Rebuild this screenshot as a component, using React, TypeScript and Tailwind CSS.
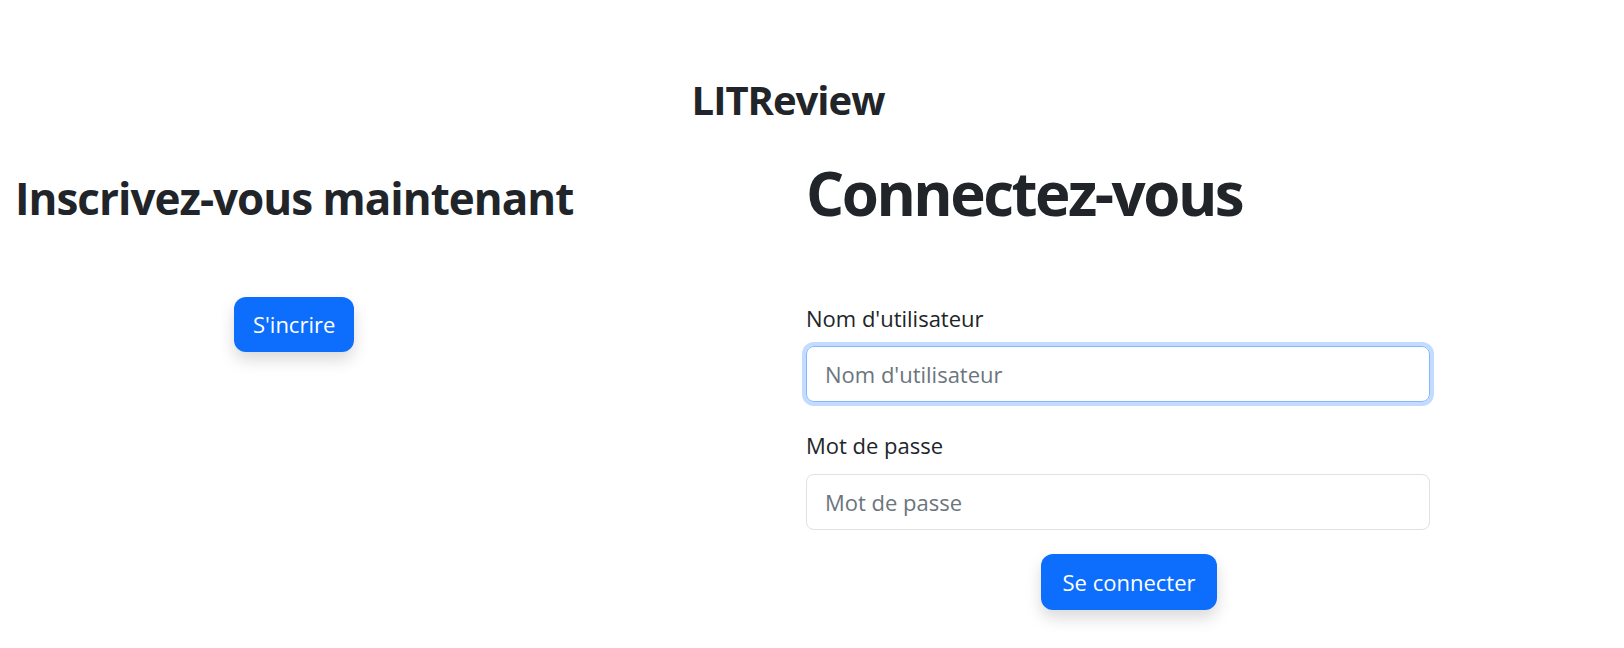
import React from "react";

export default function App() {
  return (
    <div
      className="h-[648px] w-full bg-white text-[#212529] overflow-hidden"
      style={{ fontFamily: '"Open Sans", "Noto Sans", sans-serif' }}
    >
      <header className="pt-[76px] pr-[48px] text-center">
        <h1 className="text-[40px] font-bold leading-[1.2] tracking-[-1px]">LITReview</h1>
      </header>

      <main className="flex mt-[33px]">
        <section className="w-[806px] pl-[15px]">
          <div className="w-fit flex flex-col items-center">
            <h2 className="text-[44px] font-bold leading-[1.2] tracking-[-1px] mt-[15px]">
              Inscrivez-vous maintenant
            </h2>
            <button className="mt-[72px] h-[55px] px-[19px] rounded-[12px] bg-[#0d6efd] text-white text-[22px] shadow-[0_8px_16px_rgba(0,0,0,0.15)]">
              S'incrire
            </button>
          </div>
        </section>

        <section className="w-[624px]">
          <h2 className="text-[60px] font-bold leading-[1.2] tracking-[-2.5px]">Connectez-vous</h2>
          <form className="mt-[73px] flex flex-col">
            <label className="text-[22px] leading-[1.5]">Nom d'utilisateur</label>
            <input
              placeholder="Nom d'utilisateur"
              autoFocus
              className="mt-[11px] h-[56px] w-full rounded-[8px] border border-[#86b7fe] px-[18px] text-[22px] placeholder:text-[#6c757d] outline-none ring-[4px] ring-[#c2dbfe]"
            />
            <label className="mt-[27px] text-[22px] leading-[1.5]">Mot de passe</label>
            <input
              type="password"
              placeholder="Mot de passe"
              className="mt-[12px] h-[56px] w-full rounded-[8px] border border-[#dee2e6] px-[18px] text-[22px] placeholder:text-[#6c757d] outline-none"
            />
            <div className="flex justify-center pl-[22px] mt-[24px]">
              <button
                type="button"
                className="h-[56px] px-[22px] rounded-[12px] bg-[#0d6efd] text-white text-[22px] shadow-[0_8px_16px_rgba(0,0,0,0.15)]"
              >
                Se connecter
              </button>
            </div>
          </form>
        </section>
      </main>
    </div>
  );
}
